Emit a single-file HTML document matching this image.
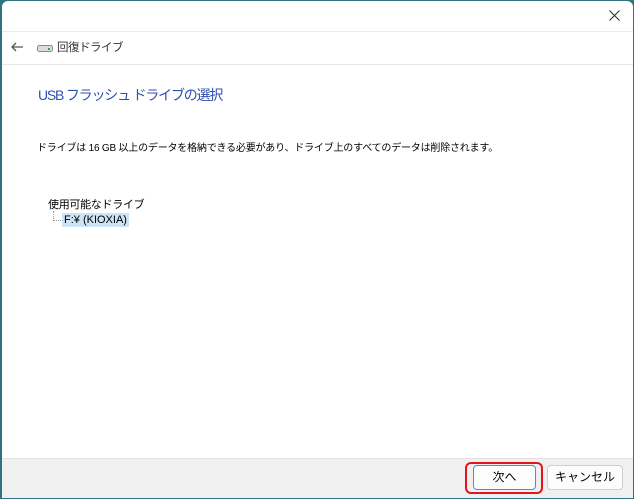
<!DOCTYPE html>
<html><head><meta charset="utf-8"><style>
*{margin:0;padding:0;box-sizing:border-box}
body{width:634px;height:499px;overflow:hidden;background:#2f7480;font-family:"Liberation Sans","Noto Sans CJK JP",sans-serif;position:relative}
.win{position:absolute;left:2px;top:1px;width:631px;height:497px;background:#fff;border-radius:6px 6px 0 0;overflow:hidden}
.hdr{position:absolute;left:0;top:30px;width:100%;height:34px;border-top:1px solid #eaeaea;border-bottom:1px solid #e6e6e6}
.t{position:absolute;white-space:nowrap;color:#000}
.foot{position:absolute;left:0;top:457px;width:100%;height:40px;background:#f0f0f0;border-top:1px solid #e3e3e3}
.btn{position:absolute;top:6px;height:25px;border:1px solid #cfcfcf;background:#fdfdfd;border-radius:4px;font-size:12px;text-align:center;line-height:23px}
</style></head><body>
<div class="win">
 <svg style="position:absolute;left:607px;top:9px" width="11" height="11"><path d="M0.5 0.5L10.5 10.5M10.5 0.5L0.5 10.5" stroke="#333" stroke-width="1.1"/></svg>
 <div class="hdr">
  <svg style="position:absolute;left:8px;top:8px" width="14" height="14" viewBox="0 0 14 14"><path d="M13 7H2M6 3L2 7l4 4" stroke="#555" stroke-width="1.3" fill="none"/></svg>
  <svg style="position:absolute;left:35px;top:12px" width="16" height="9"><rect x="0.5" y="1.5" width="15" height="6" rx="2" fill="#ddd" stroke="#888"/><rect x="11" y="4" width="2" height="2" fill="#3a3"/></svg>
  <div class="t" style="left:55px;top:7px;font-size:11.5px;color:#333;letter-spacing:-0.5px">回復ドライブ</div>
 </div>
 <div class="t" style="left:36px;top:84px;font-size:14px;color:#2f4fad;letter-spacing:-1.2px">USB フラッシュ ドライブの選択</div>
 <div class="t" style="left:35px;top:138px;font-size:10px;letter-spacing:-0.2px">ドライブは 16 GB 以上のデータを格納できる必要があり、ドライブ上のすべてのデータは削除されます。</div>
 <div class="t" style="left:46px;top:195px;font-size:11px;letter-spacing:-0.3px">使用可能なドライブ</div>
 <div style="position:absolute;left:51px;top:210px;width:8px;height:10px;border-left:1px dotted #999;border-bottom:1px dotted #999"></div>
 <div class="t" style="left:60px;top:212px;font-size:11px;background:#cce4f7;padding:1px 2px">F:¥ (KIOXIA)</div>
 <div class="foot">
  <div style="position:absolute;left:463px;top:3px;width:78px;height:32px;border:2px solid #e5141b;border-radius:6px"></div>
  <div class="btn" style="left:471px;width:63px;border-color:#4a8ed6">次へ</div>
  <div class="btn" style="left:545px;width:76px">キャンセル</div>
 </div>
</div>
</body></html>
